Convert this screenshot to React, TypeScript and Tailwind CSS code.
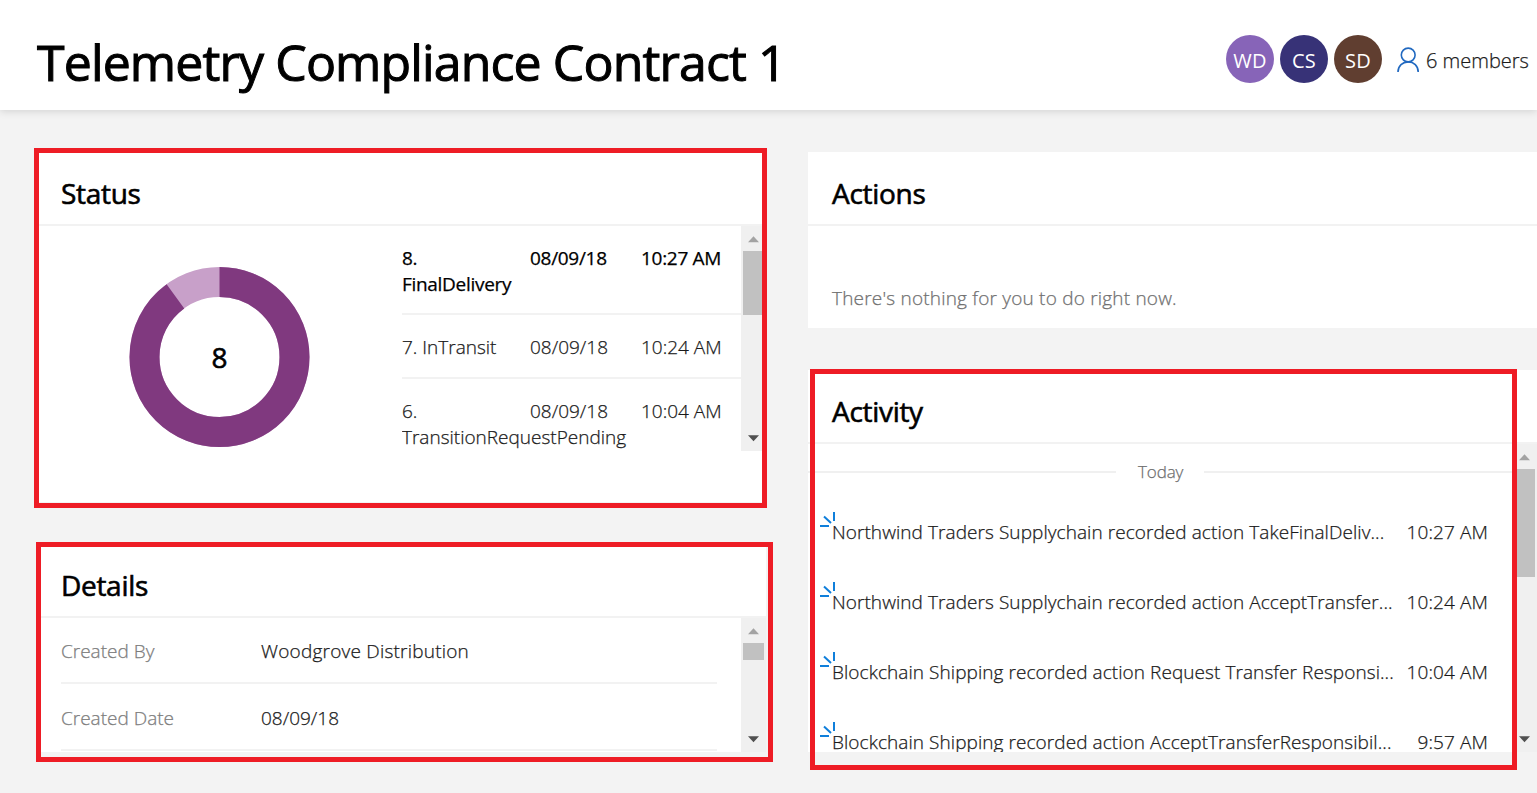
import type { ReactNode } from "react";

const states = [
  { n: 8, name: "FinalDelivery", time: "10:27 AM" },
  { n: 7, name: "InTransit", time: "10:24 AM" },
  { n: 6, name: "TransitionRequestPending", time: "10:04 AM" },
];

const activity = [
  { text: "Northwind Traders Supplychain recorded action TakeFinalDeliv...", time: "10:27 AM" },
  { text: "Northwind Traders Supplychain recorded action AcceptTransfer...", time: "10:24 AM" },
  { text: "Blockchain Shipping recorded action Request Transfer Responsi...", time: "10:04 AM" },
  { text: "Blockchain Shipping recorded action AcceptTransferResponsibil...", time: "9:57 AM" },
];

const members = [
  { initials: "WD", color: "bg-[#8764b8]" },
  { initials: "CS", color: "bg-[#373277]" },
  { initials: "SD", color: "bg-[#603e30]" },
];

function Heading({ children }: { children: ReactNode }) {
  return (
    <h2 className="h-[74px] shrink-0 border-b-2 border-[#f2f2f2] pl-6 pt-[21px] text-[28px] leading-[40px] font-normal tracking-[-0.3px] text-black [-webkit-text-stroke:0.6px_black]">
      {children}
    </h2>
  );
}

function Scrollbar({ thumb }: { thumb: string }) {
  return (
    <div className="flex w-[25px] shrink-0 flex-col items-center bg-[#f0f0f0]">
      <svg className="h-[25px] w-[25px] shrink-0" viewBox="0 0 25 25">
        <path d="M7 16.2L12.5 10.3L18 16.2Z" fill="#a3a3a3" />
      </svg>
      <div className={`w-[21px] bg-[#c1c1c1] ${thumb}`} />
      <svg className="mt-auto h-[25px] w-[25px] shrink-0" viewBox="0 0 25 25">
        <path d="M7 9.3H18L12.5 15.2Z" fill="#505050" />
      </svg>
    </div>
  );
}

function Donut() {
  return (
    <div className="relative mt-[41px] ml-[92px] h-[180px] w-[181px] shrink-0">
      <svg className="size-full" viewBox="0 0 181 180">
        <g fill="none" strokeWidth="30" transform="rotate(-90 90.5 90)">
          <circle cx="90.5" cy="90" r="75" stroke="#c8a0c9" />
          <circle cx="90.5" cy="90" r="75" stroke="#80397f" pathLength="100" strokeDasharray="90 10" />
        </g>
      </svg>
      <span className="absolute inset-0 flex items-center justify-center text-[28px] font-normal text-black [-webkit-text-stroke:0.6px_black]">
        8
      </span>
    </div>
  );
}

function Spark() {
  return (
    <svg className="absolute -top-[7px] -left-[12px] h-4 w-4" viewBox="0 0 16 16" fill="none" stroke="#0f7fdb" strokeWidth="2">
      <path d="M0 14H9M4 4.5L11 11M14 0V9" />
    </svg>
  );
}

export default function App() {
  return (
    <div className="flex h-[793px] w-[1537px] flex-col overflow-hidden bg-[#f3f3f3] font-['Open_Sans','Noto_Sans',sans-serif] text-[19px] leading-[26px] font-light text-[#1a1a1a] [-webkit-text-stroke:0.25px_currentColor]">
      <header className="flex h-[110px] shrink-0 items-center justify-between bg-white pl-[37px] pr-2 shadow-[0_1px_8px_rgba(0,0,0,0.15)]">
        <h1 className="pt-[13px] text-[50px] leading-[68px] font-normal tracking-[-0.87px] whitespace-nowrap text-black [-webkit-text-stroke:1px_black]">
          Telemetry Compliance Contract 1
        </h1>
        <div className="flex items-center pt-2">
          <div className="flex gap-1.5">
            {members.map((m) => (
              <span key={m.initials} className={`flex size-12 items-center justify-center rounded-full pt-[3px] text-[20px] font-normal tracking-[0.3px] text-white [-webkit-text-stroke:0] ${m.color}`}>
                {m.initials}
              </span>
            ))}
          </div>
          <svg className="ml-[14px] h-[25px] w-6" viewBox="0 0 24 25" fill="none" stroke="#2169c0" strokeWidth="1.6">
            <circle cx="12.2" cy="8" r="6.9" />
            <path d="M2 25C2 18.8 6.6 14.9 12.2 14.9S22.2 18.8 22.2 25" />
          </svg>
          <span className="ml-[6px] w-[103px] pt-[3px] text-[20px] whitespace-nowrap">6 members</span>
        </div>
      </header>

      <main className="flex gap-[42px] pt-[42px] pl-[37px]">
        <div className="flex w-[729px] shrink-0 flex-col gap-[42px]">
          <section className="relative flex h-[350px] flex-col bg-white">
            <Heading>Status</Heading>
            <div className="flex h-[225px]">
              <Donut />
              <div className="ml-[92px] h-[225px] w-[339px] shrink-0 overflow-hidden">
                {states.map((s) => (
                  <div
                    key={s.n}
                    className={`flex border-b-2 border-[#f2f2f2] last:border-0 ${s.n === 8 ? "pt-[19px] pb-[16px] font-normal tracking-[-0.3px] text-black" : "pt-[19px] pb-[17px]"}`}
                  >
                    <span className="w-[128px]">
                      {s.n}. {s.name}
                    </span>
                    <span className="w-[111px]">08/09/18</span>
                    <span className="whitespace-nowrap">{s.time}</span>
                  </div>
                ))}
              </div>
              <Scrollbar thumb="h-16" />
            </div>
            <div className="pointer-events-none absolute -top-1 -left-[3px] h-[360px] w-[733px] border-5 border-[#ee1c25]" />
          </section>

          <section className="relative flex h-[208px] flex-col bg-white">
            <Heading>Details</Heading>
            <div className="flex h-[134px]">
              <dl className="flex-1 overflow-hidden pr-6 pl-6">
                <div className="flex h-[66px] border-b-2 border-[#f2f2f2] pt-5">
                  <dt className="w-[200px] text-[#7d7d7d]">Created By</dt>
                  <dd className="tracking-[0.22px]">Woodgrove Distribution</dd>
                </div>
                <div className="flex h-[67px] border-b-2 border-[#f2f2f2] pt-[21px]">
                  <dt className="w-[200px] text-[#7d7d7d]">Created Date</dt>
                  <dd>08/09/18</dd>
                </div>
              </dl>
              <Scrollbar thumb="h-[17px]" />
            </div>
            <div className="pointer-events-none absolute -top-[2px] -left-px h-[220px] w-[737px] border-5 border-[#ee1c25]" />
          </section>
        </div>

        <div className="flex w-[729px] shrink-0 flex-col gap-[42px]">
          <section className="h-44 bg-white">
            <Heading>Actions</Heading>
            <p className="pt-[59px] pl-6 tracking-[0.2px] text-[#707070]">There&apos;s nothing for you to do right now.</p>
          </section>

          <section className="relative flex h-[382px] flex-col bg-white">
            <Heading>Activity</Heading>
            <div className="flex h-[308px]">
              <div className="flex-1 overflow-hidden">
                <div className="flex h-14 items-center gap-[21px] text-[17px] text-[#707070]">
                  <hr className="w-[308px] border-t-2 border-[#f0f0f0]" />
                  <span className="w-[46px] pl-px tracking-[-0.1px]">Today</span>
                  <hr className="flex-1 border-t-2 border-[#f0f0f0]" />
                </div>
                {activity.map((a) => (
                  <div key={a.time} className="flex h-[70px] justify-between pt-[19px] pr-6 pl-6">
                    <div className="relative w-[562px] tracking-[0.07px] whitespace-nowrap">
                      <Spark />
                      {a.text}
                    </div>
                    <span className="tracking-[0.1px] whitespace-nowrap">{a.time}</span>
                  </div>
                ))}
              </div>
              <Scrollbar thumb="h-[108px]" />
            </div>
            <div className="pointer-events-none absolute -top-px left-[2px] h-[401px] w-[707px] border-5 border-[#ee1c25]" />
          </section>
        </div>
      </main>
    </div>
  );
}
